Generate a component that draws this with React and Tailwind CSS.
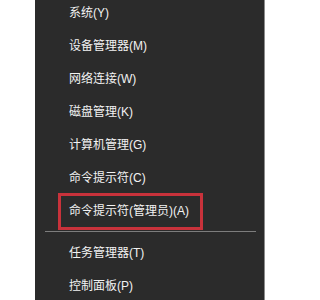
import React from "react";

const items = [
  "系统(Y)",
  "设备管理器(M)",
  "网络连接(W)",
  "磁盘管理(K)",
  "计算机管理(G)",
  "命令提示符(C)",
];

const bottomItems = ["任务管理器(T)", "控制面板(P)"];

const Row = ({ label }) => (
  <div className="h-[33px] flex items-center pl-[34px] text-[12px] text-[#f2f2f2] whitespace-nowrap">
    {label}
  </div>
);

const App = () => {
  return (
    <div
      className="w-[300px] h-[300px] bg-white overflow-hidden flex"
      style={{ fontFamily: '"Liberation Sans", "Noto Sans CJK SC", sans-serif' }}
    >
      <div className="ml-[35px] w-[230px] h-full bg-[#2b2b2b] border-r border-[#8c8c8c]">
        <div className="mt-[-3.5px] flex flex-col">
          {items.map((label) => (
            <Row key={label} label={label} />
          ))}
          <div className="h-[33px] flex items-center">
            <div className="ml-[23px] h-[37px] flex items-center border-[3px] border-[#c8323b] pl-[8px] pr-[11px] text-[12px] text-[#f2f2f2] whitespace-nowrap">
              命令提示符(管理员)(A)
            </div>
          </div>
          <div className="mt-[3.5px] mb-[4.5px] ml-[10px] mr-[8px] h-px bg-[#7d7d7d]" />
          {bottomItems.map((label) => (
            <Row key={label} label={label} />
          ))}
        </div>
      </div>
    </div>
  );
};

export default App;
